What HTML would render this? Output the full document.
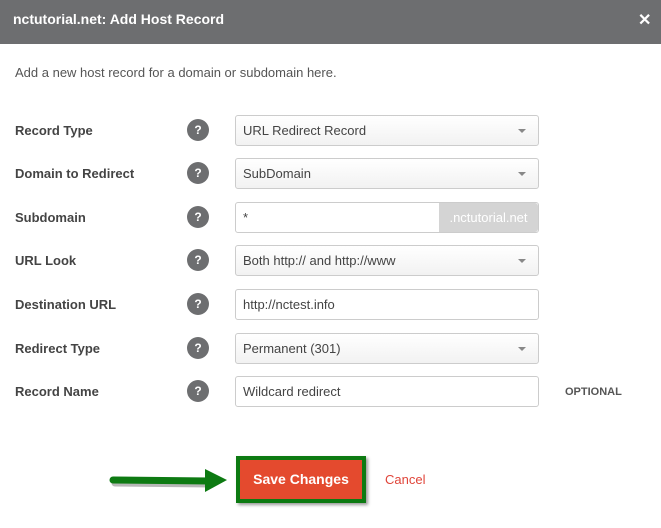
<!DOCTYPE html>
<html><head><style>
body{margin:0;width:661px;height:528px;background:#fff;font-family:"Liberation Sans",sans-serif;position:relative;overflow:hidden}
.hd{position:absolute;left:0;top:0;width:661px;height:44px;background:#6d6e70;color:#fff}
.hd .t{position:absolute;left:13px;top:11px;font-size:14px;font-weight:bold}
.hd .x{position:absolute;left:638px;top:10px;font-size:16px;font-weight:bold}
.intro{position:absolute;left:15px;top:65px;font-size:13px;color:#555}
.lbl{position:absolute;left:15px;font-size:13px;font-weight:bold;color:#444}
.q{position:absolute;left:187px;width:22px;height:22px;border-radius:50%;background:#6d6e70;color:#fff;font-size:12px;font-weight:bold;text-align:center;line-height:22px}
.f{position:absolute;left:235px;width:302px;height:29px;border:1px solid #ccc;border-radius:3px;font-size:13px;color:#444;line-height:29px;box-sizing:content-box}
.f span{position:absolute;left:7px}
.sel{background:linear-gradient(#fff,#f2f2f2)}
.sel:after{content:"";position:absolute;right:12px;top:13px;border-left:4px solid transparent;border-right:4px solid transparent;border-top:4px solid #888}
.suf{position:absolute;right:0;top:0;width:99px;height:29px;background:#d4d4d4;color:#fff;text-align:center;border-radius:0 3px 3px 0}
</style></head><body>
<div class="hd"><div class="t">nctutorial.net: Add Host Record</div><div class="x">✕</div></div>
<div class="intro">Add a new host record for a domain or subdomain here.</div>

<div class="lbl" style="top:123px">Record Type</div><div class="q" style="top:119px">?</div>
<div class="f sel" style="top:115px"><span>URL Redirect Record</span></div>

<div class="lbl" style="top:166px">Domain to Redirect</div><div class="q" style="top:162px">?</div>
<div class="f sel" style="top:158px"><span>SubDomain</span></div>

<div class="lbl" style="top:210px">Subdomain</div><div class="q" style="top:206px">?</div>
<div class="f" style="top:202px"><span>*</span><div class="suf">.nctutorial.net</div></div>

<div class="lbl" style="top:253px">URL Look</div><div class="q" style="top:249px">?</div>
<div class="f sel" style="top:245px"><span>Both http:// and http://www</span></div>

<div class="lbl" style="top:297px">Destination URL</div><div class="q" style="top:293px">?</div>
<div class="f" style="top:289px"><span>http://nctest.info</span></div>

<div class="lbl" style="top:341px">Redirect Type</div><div class="q" style="top:337px">?</div>
<div class="f sel" style="top:333px"><span>Permanent (301)</span></div>

<div class="lbl" style="top:384px">Record Name</div><div class="q" style="top:380px">?</div>
<div class="f" style="top:376px"><span>Wildcard redirect</span></div>
<div style="position:absolute;left:565px;top:386px;font-size:11px;font-weight:bold;color:#555">OPTIONAL</div>

<svg style="position:absolute;left:105px;top:465px" width="130" height="30">
<line x1="8" y1="16" x2="105" y2="17" stroke="#333" stroke-width="7" stroke-linecap="round" opacity=".35" transform="translate(2,2)"/>
<line x1="8" y1="15" x2="105" y2="16" stroke="#0d7a12" stroke-width="7" stroke-linecap="round"/>
<polygon points="100,4 122,15 100,27" fill="#0d7a12"/>
</svg>
<div style="position:absolute;left:236px;top:456px;width:122px;height:39px;border:4px solid #0d7a12;background:#e44a2e;color:#fff;font-weight:bold;font-size:14px;text-align:center;line-height:39px;box-shadow:2px 2px 3px rgba(0,0,0,.4)">Save Changes</div>
<div style="position:absolute;left:385px;top:472px;font-size:13px;color:#e0453a">Cancel</div>
</body></html>
